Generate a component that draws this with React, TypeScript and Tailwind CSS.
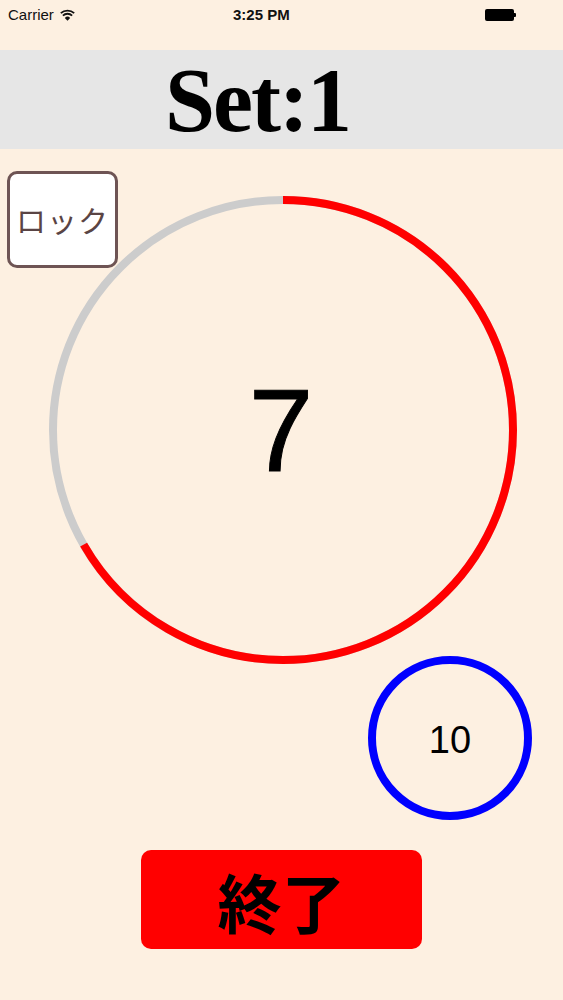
import React from "react";

export default function App() {
  const r = 230;
  const c = 2 * Math.PI * r;
  const red = (c * 2) / 3;
  return (
    <div className="w-[563px] h-[1000px] bg-[#fdf0e1] flex flex-col relative overflow-hidden" style={{ fontFamily: '"Liberation Sans", Arial, sans-serif' }}>
      {/* status bar */}
      <div className="h-[30px] flex items-center justify-between px-[8px] relative text-[15px] text-[#111]">
        <div className="flex items-center gap-[6px]">
          <span>Carrier</span>
          <svg width="15" height="12" viewBox="0 0 15 12">
            <path d="M7.5 11.8 L4.8 8.9 A3.9 3.9 0 0 1 10.2 8.9 Z" fill="#111" />
            <path d="M2.9 6.6 A6.6 6.6 0 0 1 12.1 6.6" stroke="#111" strokeWidth="1.8" fill="none" />
            <path d="M0.8 4.2 A9.8 9.8 0 0 1 14.2 4.2" stroke="#111" strokeWidth="1.8" fill="none" />
          </svg>
        </div>
        <span className="absolute left-[233px] font-bold pointer-events-none">3:25 PM</span>
        <div className="flex items-center mr-[39px]">
          <div className="w-[29px] h-[12px] bg-black rounded-[2px]" />
          <div className="w-[2px] h-[4px] bg-black rounded-r-[1px]" />
        </div>
      </div>
      {/* set band */}
      <div className="mt-[20px] h-[99px] bg-[#e6e6e6] flex items-center justify-center pr-[48px]">
        <span className="text-[90px] font-bold leading-none text-black tracking-[-2px] mt-[2px]" style={{ fontFamily: '"Liberation Serif", "Times New Roman", serif' }}>
          Set:1
        </span>
      </div>
      {/* timer area */}
      <div className="relative mt-[46px] ml-[48px] w-[470px] h-[470px]">
        <svg width="470" height="470" viewBox="0 0 470 470">
          <circle cx="235" cy="235" r={r} stroke="#cccccc" strokeWidth="8" fill="none" />
          <circle
            cx="235"
            cy="235"
            r={r}
            stroke="#ff0000"
            strokeWidth="8"
            fill="none"
            strokeDasharray={`${red} ${c}`}
            transform="rotate(-90 235 235)"
          />
        </svg>
        <div className="absolute inset-0 flex items-center justify-center">
          <span className="text-[116px] leading-none text-black mt-[2px] mr-[4px]" style={{ WebkitTextStroke: "1px black" }}>7</span>
        </div>
      </div>
      <button className="absolute left-[7px] top-[171px] w-[111px] h-[97px] bg-white border-[3px] border-[#6e5454] rounded-[10px] flex items-center justify-center text-[30px] text-[#5a4444] tracking-[1px]" style={{ fontFamily: '"Noto Sans CJK JP", sans-serif' }}>
        ロック
      </button>
      {/* small circle */}
      <div className="-mt-[9px] self-end mr-[31px] w-[164px] h-[164px] rounded-full border-[8px] border-[#0000ff] flex items-center justify-center">
        <span className="text-[38px] leading-none text-black mt-[4px]">10</span>
      </div>
      {/* end button */}
      <button className="mt-[30px] mx-auto w-[281px] h-[99px] bg-[#ff0000] rounded-[10px] flex items-center justify-center text-[64px] font-bold text-black" style={{ fontFamily: '"Noto Sans CJK JP", sans-serif' }}>
        終了
      </button>
    </div>
  );
}
